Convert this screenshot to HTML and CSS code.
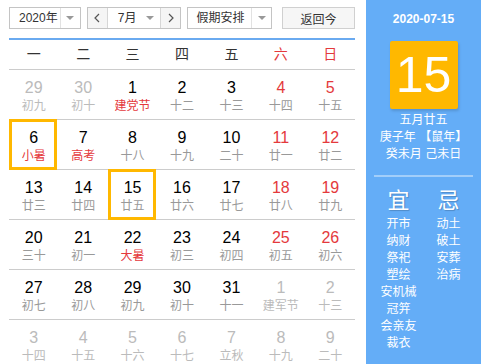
FILE: index.html
```html
<!DOCTYPE html>
<html lang="zh-CN">
<head>
    <meta charset="UTF-8">
    <meta name="viewport" content="width=device-width, initial-scale=1.0">
    <title>万年历</title>
    <link rel="stylesheet" href="styles.css">
</head>
<body>
    <div class="calendar">
        <div class="cal-main">
            <div class="toolbar">
                <div class="select year-select">
                    <span class="select-text">2020年</span>
                    <span class="select-arrow sep"><i class="tri"></i></span>
                </div>
                <div class="select month-select">
                    <span class="nav-btn">
                        <svg width="6" height="10" viewBox="0 0 6 10"><polyline points="5,1 1,5 5,9" fill="none" stroke="#555" stroke-width="1.2"/></svg>
                    </span>
                    <span class="select-text month-text">7月</span>
                    <span class="select-arrow"><i class="tri"></i></span>
                    <span class="nav-btn next">
                        <svg width="6" height="10" viewBox="0 0 6 10"><polyline points="1,1 5,5 1,9" fill="none" stroke="#555" stroke-width="1.2"/></svg>
                    </span>
                </div>
                <div class="select holiday-select">
                    <span class="select-text">假期安排</span>
                    <span class="select-arrow sep"><i class="tri"></i></span>
                </div>
                <button class="today-btn">返回今</button>
            </div>

            <div class="week-head">
                <span>一</span><span>二</span><span>三</span><span>四</span><span>五</span>
                <span class="weekend">六</span><span class="weekend">日</span>
            </div>

            <div class="week-row">
                <div class="day other"><b>29</b><small>初九</small></div>
                <div class="day other"><b>30</b><small>初十</small></div>
                <div class="day"><b>1</b><small class="fest">建党节</small></div>
                <div class="day"><b>2</b><small>十二</small></div>
                <div class="day"><b>3</b><small>十三</small></div>
                <div class="day weekend"><b>4</b><small>十四</small></div>
                <div class="day weekend"><b>5</b><small>十五</small></div>
            </div>
            <div class="week-row">
                <div class="day marked"><b>6</b><small class="fest">小暑</small></div>
                <div class="day"><b>7</b><small class="fest">高考</small></div>
                <div class="day"><b>8</b><small>十八</small></div>
                <div class="day"><b>9</b><small>十九</small></div>
                <div class="day"><b>10</b><small>二十</small></div>
                <div class="day weekend"><b>11</b><small>廿一</small></div>
                <div class="day weekend"><b>12</b><small>廿二</small></div>
            </div>
            <div class="week-row">
                <div class="day"><b>13</b><small>廿三</small></div>
                <div class="day"><b>14</b><small>廿四</small></div>
                <div class="day marked"><b>15</b><small>廿五</small></div>
                <div class="day"><b>16</b><small>廿六</small></div>
                <div class="day"><b>17</b><small>廿七</small></div>
                <div class="day weekend"><b>18</b><small>廿八</small></div>
                <div class="day weekend"><b>19</b><small>廿九</small></div>
            </div>
            <div class="week-row">
                <div class="day"><b>20</b><small>三十</small></div>
                <div class="day"><b>21</b><small>初一</small></div>
                <div class="day"><b>22</b><small class="fest">大暑</small></div>
                <div class="day"><b>23</b><small>初三</small></div>
                <div class="day"><b>24</b><small>初四</small></div>
                <div class="day weekend"><b>25</b><small>初五</small></div>
                <div class="day weekend"><b>26</b><small>初六</small></div>
            </div>
            <div class="week-row">
                <div class="day"><b>27</b><small>初七</small></div>
                <div class="day"><b>28</b><small>初八</small></div>
                <div class="day"><b>29</b><small>初九</small></div>
                <div class="day"><b>30</b><small>初十</small></div>
                <div class="day"><b>31</b><small>十一</small></div>
                <div class="day other"><b>1</b><small>建军节</small></div>
                <div class="day other"><b>2</b><small>十三</small></div>
            </div>
            <div class="week-row">
                <div class="day other"><b>3</b><small>十四</small></div>
                <div class="day other"><b>4</b><small>十五</small></div>
                <div class="day other"><b>5</b><small>十六</small></div>
                <div class="day other"><b>6</b><small>十七</small></div>
                <div class="day other"><b>7</b><small>立秋</small></div>
                <div class="day other"><b>8</b><small>十九</small></div>
                <div class="day other"><b>9</b><small>二十</small></div>
            </div>
        </div>

        <div class="cal-side">
            <div class="side-date">2020-07-15</div>
            <div class="side-day">15</div>
            <div class="side-lunar">
                <p>五月廿五</p>
                <p>庚子年 【鼠年】</p>
                <p>癸未月 己未日</p>
            </div>
            <div class="side-line"></div>
            <div class="almanac">
                <div class="almanac-col">
                    <h3>宜</h3>
                    <p>开市</p>
                    <p>纳财</p>
                    <p>祭祀</p>
                    <p>塑绘</p>
                    <p>安机械</p>
                    <p>冠笄</p>
                    <p>会亲友</p>
                    <p>裁衣</p>
                </div>
                <div class="almanac-col">
                    <h3>忌</h3>
                    <p>动土</p>
                    <p>破土</p>
                    <p>安葬</p>
                    <p>治病</p>
                </div>
            </div>
        </div>
    </div>
</body>
</html>
```

FILE: styles.css
```css
* {
    box-sizing: border-box;
}
body {
    margin: 0;
    font-family: 'Liberation Sans', 'Noto Sans CJK SC', sans-serif;
    background: #fff;
    overflow: hidden;
}
.calendar {
    display: flex;
    width: 481px;
    height: 364px;
}
.cal-main {
    width: 366px;
    padding: 7px 11px 0 9px;
}

/* toolbar */
.toolbar {
    display: flex;
    height: 22px;
    border-bottom: 0;
}
.select {
    display: flex;
    height: 22px;
    border: 1px solid #c4c4c4;
    background: #fff;
    font-size: 12px;
    line-height: 20px;
    color: #333;
}
.select-text {
    flex: 1;
    padding-left: 9px;
}
.select-arrow {
    width: 20px;
    display: flex;
    align-items: center;
    justify-content: center;
}
.select-arrow.sep {
    border-left: 1px solid #e2e2e2;
}
.tri {
    width: 0;
    height: 0;
    border-left: 4px solid transparent;
    border-right: 4px solid transparent;
    border-top: 4px solid #999;
}
.year-select {
    width: 72px;
}
.month-select {
    width: 95px;
    margin-left: 6px;
}
.month-text {
    padding-left: 10px;
}
.nav-btn {
    width: 20px;
    display: flex;
    align-items: center;
    justify-content: center;
    background: #f5f5f5;
    border-right: 1px solid #d6d6d6;
}
.nav-btn.next {
    border-right: 0;
    border-left: 1px solid #d6d6d6;
}
.holiday-select {
    width: 85px;
    margin-left: 6px;
}
.holiday-select .select-text {
    padding-left: 8px;
}
.today-btn {
    width: 73px;
    height: 22px;
    margin-left: 10px;
    padding: 0;
    border: 1px solid #d0d0d0;
    background: #f6f6f6;
    font-family: inherit;
    font-size: 12px;
    color: #333;
}

/* grid */
.week-head {
    display: grid;
    grid-template-columns: repeat(7, 1fr);
    margin-top: 9px;
    border-top: 2px solid #6aaaf0;
    border-bottom: 1px solid #ccc;
    height: 32px;
    line-height: 28px;
    text-align: center;
    font-size: 14px;
    color: #333;
}
.week-head .weekend {
    color: #e4393c;
}
.week-row {
    display: grid;
    grid-template-columns: repeat(7, 1fr);
    border-bottom: 1px solid #ccc;
    height: 50px;
}
.day {
    position: relative;
    text-align: center;
    padding-top: 8px;
}
.day b {
    display: block;
    font-weight: normal;
    font-size: 16px;
    line-height: 20px;
    color: #000;
}
.day small {
    display: block;
    font-size: 12px;
    line-height: 16px;
    color: #999;
}
.day.weekend b {
    color: #e4393c;
}
.day small.fest {
    color: #e4393c;
}
.day.other b,
.day.other small {
    color: #bbb;
}
.day.marked::after {
    content: '';
    position: absolute;
    top: -1px;
    bottom: -1px;
    left: 0;
    right: 1px;
    border: 3px solid #ffb800;
}

/* side panel */
.cal-side {
    flex: 1;
    background: #64adf7;
    color: #fff;
    text-align: center;
    padding-top: 11px;
}
.side-date {
    font-size: 12px;
    font-weight: bold;
    line-height: 17px;
}
.side-day {
    width: 68px;
    height: 68px;
    margin: 13px auto 0;
    background: #ffb800;
    border-radius: 2px;
    box-shadow: 1px 2px 3px rgba(0, 0, 0, 0.15);
    font-size: 50px;
    line-height: 68px;
}
.side-lunar {
    margin-top: 3px;
    font-size: 12px;
    line-height: 17px;
}
.side-lunar p {
    margin: 0;
}
.side-line {
    width: 99px;
    height: 2px;
    margin: 12px auto 0;
    background: rgba(255, 255, 255, 0.4);
}
.almanac {
    display: flex;
    justify-content: center;
    margin-top: 11px;
}
.almanac-col {
    width: 50px;
}
.almanac-col h3 {
    margin: 0 0 2px;
    font-size: 22px;
    font-weight: normal;
    line-height: 26px;
    text-shadow: 1px 1px 1px rgba(0, 0, 0, 0.2);
}
.almanac-col p {
    margin: 0;
    font-size: 12px;
    line-height: 17px;
}
```
